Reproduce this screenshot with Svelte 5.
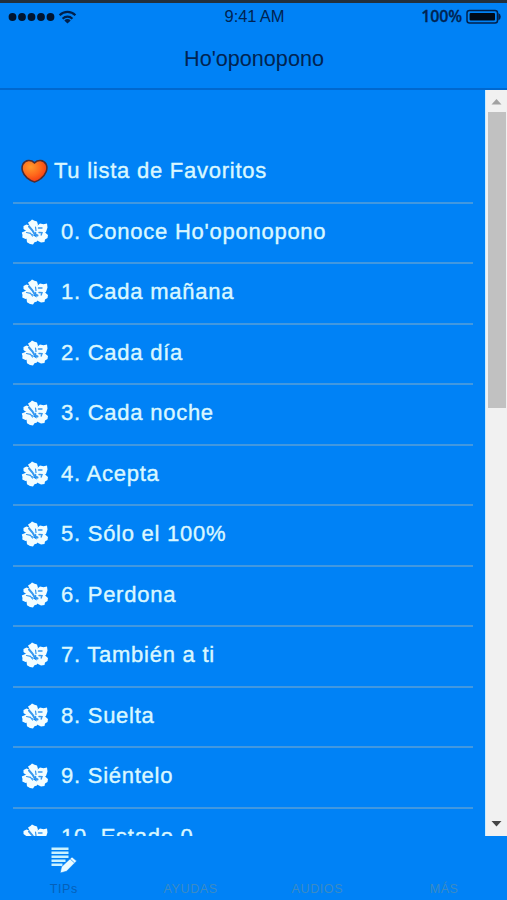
<script>
    const tips = [
        "0. Conoce Ho'oponopono",
        "1. Cada mañana",
        "2. Cada día",
        "3. Cada noche",
        "4. Acepta",
        "5. Sólo el 100%",
        "6. Perdona",
        "7. También a ti",
        "8. Suelta",
        "9. Siéntelo",
        "10. Estado 0",
    ];
    const tabs = ["TIPs", "AYUDAS", "AUDIOS", "MÁS"];
    let activeTab = $state("TIPs");
</script>

<div class="phone">
    <div class="status">
        <div class="signal">
            <svg width="80" height="20" viewBox="0 0 80 20">
                {#each [12.5, 22, 31.5, 41, 50.5] as cx}
                    <circle {cx} cy="11" r="3.9" fill="#00142f" />
                {/each}
                <g fill="none" stroke="#00204c" stroke-width="2.2">
                    <path d="M59.6 9.2a11.2 11.2 0 0 1 15.8 0" />
                    <path d="M62.6 12.7a7 7 0 0 1 9.8 0" />
                </g>
                <path d="M64.3 14.4a4.7 4.7 0 0 1 6.4 0L67.5 17.5z" fill="#00204c" />
            </svg>
        </div>
        <span class="time">9:41 AM</span>
        <div class="power">
            <span>100%</span>
            <svg width="36" height="16" viewBox="0 0 36 16">
                <rect x="1" y="1.5" width="30.5" height="12.5" rx="2.5" fill="none" stroke="#00204c" stroke-width="1.5" />
                <rect x="3.6" y="4" width="25.4" height="7.5" rx="1" fill="#000a18" />
                <path d="M32.3 4q2.5 1.1 2.5 3.7t-2.5 3.7z" fill="#00204c" />
            </svg>
        </div>
    </div>
    <header>
        <h1>Ho'oponopono</h1>
    </header>
    <main>
        <ul>
            <li class="favorites">
                <svg width="28" height="28" viewBox="0 0 28 28">
                    <defs>
                        <radialGradient id="heart" cx=".35" cy=".3" r=".8">
                            <stop offset="0" stop-color="#ff9a2b" />
                            <stop offset=".5" stop-color="#ff681b" />
                            <stop offset="1" stop-color="#f02c12" />
                        </radialGradient>
                    </defs>
                    <path
                        d="M13.5 5.8C17 2.5 22.5 2.7 25 7c2.5 5-.5 11-5 14.5-2.2 1.900-4.300 3-6.500 3.500C11 24.500 8.500 23 6 20.900 1.800 17.200-.3 11.500 2 7 4.500 2.700 10 2.500 13.500 5.800z"
                        fill="url(#heart)"
                        stroke="#4b2d35"
                        stroke-width="1.6"
                    />
                </svg>
                <span>Tu lista de Favoritos</span>
            </li>
            {#each tips as tip}
                <li>
                    <svg width="28" height="28" viewBox="0 0 28 28">
                        <g fill="#f2fdff">
                            <path d="M7 4.500l2.500-1.500L11 1.500l2.500 1.200 2.500.8 1 3.500-2.500 6-4-1.500z" />
                            <path d="M15.500 8.500l3.500-3 3.500.7 3.500-.7.500 4-1.500 4.500-5 2.500-6-2.500z" />
                            <path d="M15 14.500l8.500-.5 3.500 3-.5 3-2.500 1.500-.5 2.500-3.500.5-4-2z" />
                            <path d="M10 16l6.500 4-.5 3.500-2.500.8-1.500 2.200-3-.5-3-1.800-.5-4z" />
                            <path d="M12 15l-3.500 5-4 1-3.200-1.500.2-2.500L.8 14.500l3.500-1.500 4-1z" />
                            <path d="M2.500 8l3-1.500 4 1.500 5 5-1.500 4-7-3.500-3.500-2.500z" />
                        </g>
                        <g fill="none" stroke="#3698ef" stroke-linecap="round">
                            <path d="M8 8.500l3.500 4 2 3.500 3 1.500" stroke-width="2" />
                            <path d="M5.500 14.500l4 .8 2 2.700M14.500 9l.5 3.500" stroke-width="1.2" />
                            <path d="M17.500 10h3.500M18 14.500l3 .2-.8 2.300" stroke-width="1.4" />
                        </g>
                    </svg>
                    <span>{tip}</span>
                </li>
            {/each}
        </ul>
        <div class="scrollbar">
            <svg width="21" height="22" viewBox="0 0 21 22">
                <path d="M5.500 14.500L10.500 9 15.500 14.500z" fill="#a2a2a2" />
            </svg>
            <div class="thumb"></div>
            <svg class="down" width="21" height="22" viewBox="0 0 21 22">
                <path d="M5.500 7L10.500 12.500 15.500 7z" fill="#454545" />
            </svg>
        </div>
    </main>
    <nav>
        {#each tabs as tab}
            <button class:active={tab === activeTab} onclick={() => (activeTab = tab)}>
                <span class="icon">
                    {#if tab === "TIPs"}
                        <svg width="28" height="28" viewBox="0 0 28 28">
                            <path
                                d="M2.500 2.700h17M2.500 6.700h17M2.500 10.700h17M2.500 14.700h14M2.500 18.700h11"
                                stroke="#c9f2ff"
                                stroke-width="2.4"
                            />
                            <path d="M11.200 27l1.300-6.200L23 11l4.700 4L17.500 25.300z" fill="#eafbff" stroke="#0082f6" stroke-width=".6" />
                            <path d="M21.200 13l4.300 3.900" stroke="#2b92ed" stroke-width=".8" />
                        </svg>
                    {/if}
                </span>
                <span class="label">{tab}</span>
            </button>
        {/each}
    </nav>
</div>

<style>
    :global(body) {
        margin: 0;
    }
    .phone {
        box-sizing: border-box;
        display: flex;
        flex-direction: column;
        height: 900px;
        border-top: 3px solid #22303d;
        background: #0082f6;
        font-family: "Liberation Sans", Arial, sans-serif;
        overflow: hidden;
    }
    .status {
        display: grid;
        grid-template-columns: 1fr auto 1fr;
        align-items: center;
        height: 27px;
        color: #002452;
    }
    .signal,
    .power {
        display: flex;
        align-items: center;
    }
    .signal svg {
        margin-top: -1px;
    }
    .power {
        justify-content: flex-end;
        gap: 4px;
        padding-right: 5px;
        font: 600 16px/20px "Open Sans", sans-serif;
        letter-spacing: -0.1px;
    }
    .power span {
        margin-top: -1px;
        -webkit-text-stroke: 0.3px #002452;
    }
    .time {
        padding-left: 2px;
        font-size: 16.5px;
        letter-spacing: -0.1px;
    }
    header {
        box-sizing: border-box;
        height: 60px;
        border-bottom: 2px solid #0068cf;
    }
    h1 {
        margin: 0;
        padding: 16px 0 0 1px;
        color: #002452;
        font-size: 21.6px;
        font-weight: normal;
        line-height: 26px;
        text-align: center;
    }
    main {
        display: flex;
        height: 746px;
        overflow: hidden;
    }
    ul {
        flex: 1;
        margin: 0;
        padding: 53px 12px 0 13px;
        list-style: none;
    }
    li {
        box-sizing: border-box;
        display: flex;
        align-items: center;
        gap: 12px;
        height: 60.5px;
        padding: 0 0 2px 8px;
        border-bottom: 2px solid #4298df;
        color: #d9f7ff;
        font-size: 22px;
        letter-spacing: 0.75px;
        white-space: nowrap;
        -webkit-text-stroke: 0.4px #d9f7ff;
    }
    li span {
        margin-top: -0.5px;
    }
    .favorites {
        gap: 5px;
    }
    .scrollbar {
        display: flex;
        flex-direction: column;
        width: 21px;
        border-left: 1px solid #c9ecff;
        background: #f1f1f1;
    }
    .thumb {
        height: 296px;
        margin: 0 1px 0 2px;
        background: #c1c1c1;
    }
    .down {
        margin-top: auto;
    }
    nav {
        display: grid;
        grid-template-columns: repeat(4, 1fr);
        height: 64px;
    }
    button {
        display: flex;
        flex-direction: column;
        align-items: center;
        padding: 10px 0 0;
        border: 0;
        background: none;
        color: #3b8bc4;
        font: 12.5px "Liberation Sans", Arial, sans-serif;
        letter-spacing: 0.6px;
    }
    .active {
        color: #0560b8;
    }
    .icon {
        height: 28px;
    }
    .label {
        margin-top: 7px;
        padding-left: 1px;
        line-height: 16px;
    }
</style>
